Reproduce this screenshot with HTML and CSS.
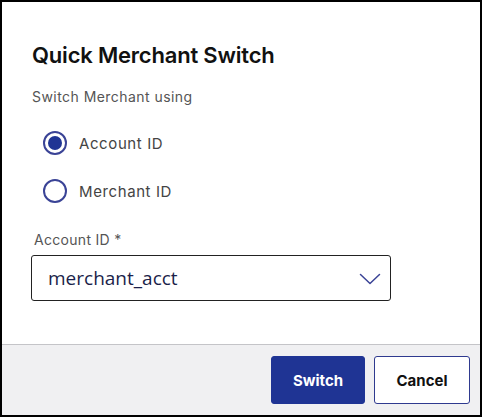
FILE: index.html
```html
<!DOCTYPE html>
<html>
<head>
<meta charset="utf-8">
<link rel="stylesheet" href="styles.css">
</head>
<body>
<div class="dialog">
  <div class="content">
    <h1 class="title">Quick Merchant Switch</h1>
    <p class="subtitle">Switch Merchant using</p>
    <div class="radios">
      <label class="radio-row">
        <span class="radio checked"><span class="dot"></span></span>
        <span class="radio-label">Account ID</span>
      </label>
      <label class="radio-row">
        <span class="radio"></span>
        <span class="radio-label">Merchant ID</span>
      </label>
    </div>
    <div class="field-label">Account ID *</div>
    <div class="select">
      <span class="select-value">merchant_acct</span>
      <svg class="chevron" width="22" height="12" viewBox="0 0 22 12"><path d="M1.5 1.5 L11 10.5 L20.5 1.5" fill="none" stroke="#3a4396" stroke-width="1.5" stroke-linecap="round" stroke-linejoin="round"/></svg>
    </div>
  </div>
  <div class="footer">
    <button class="btn btn-primary">Switch</button>
    <button class="btn btn-secondary">Cancel</button>
  </div>
</div>
</body>
</html>
```
FILE: styles.css
```css
* { box-sizing: border-box; }
html, body { margin: 0; padding: 0; background: #fff; }
body { font-family: Inter, "Noto Sans", sans-serif; }
.dialog {
  width: 482px;
  height: 417px;
  border: 2px solid #000;
  display: flex;
  flex-direction: column;
  background: #fff;
}
.content {
  flex: 1;
  padding: 39px 0 0 30px;
}
.title {
  margin: 0;
  font-size: 22px;
  line-height: 28px;
  font-weight: 600;
  color: #111;
  letter-spacing: -0.2px;
}
.subtitle {
  margin: 18px 0 0 0;
  font-size: 14px;
  line-height: 20px;
  letter-spacing: 0.45px;
  color: #555;
}
.radios {
  margin-top: 24px;
  display: flex;
  flex-direction: column;
  gap: 24px;
}
.radio-row {
  display: flex;
  align-items: center;
  gap: 12px;
  padding-left: 11px;
  height: 24px;
}
.radio {
  width: 24px;
  height: 24px;
  border-radius: 50%;
  border: 2px solid #3a4396;
  display: flex;
  align-items: center;
  justify-content: center;
}
.dot {
  width: 14px;
  height: 14px;
  border-radius: 50%;
  background: #1f3494;
}
.radio-label {
  font-size: 15px;
  letter-spacing: 0.6px;
  color: #444;
}
.field-label {
  margin-top: 27px;
  padding-left: 2px;
  font-size: 14px;
  line-height: 20px;
  letter-spacing: 0.3px;
  color: #555;
}
.select {
  margin-top: 5px;
  margin-left: -1px;
  width: 360px;
  height: 46px;
  border: 1.5px solid #222;
  border-radius: 3px;
  display: flex;
  align-items: center;
  justify-content: space-between;
  padding: 0 9px 0 16px;
}
.select-value {
  font-size: 19px;
  color: #1b1f4a;
  font-family: "Open Sans", sans-serif;
}
.chevron { margin-top: 2px; }
.footer {
  height: 71px;
  background: #f0f0f2;
  border-top: 1px solid #c4c4c8;
  display: flex;
  justify-content: flex-end;
  align-items: flex-start;
  gap: 9px;
  padding: 11px 10px 0 0;
}
.btn {
  height: 48px;
  border-radius: 3px;
  font-family: Inter, sans-serif;
  font-size: 15px;
  font-weight: 700;
  cursor: pointer;
}
.btn-primary {
  width: 94px;
  background: #1f3494;
  border: 1px solid #1f3494;
  color: #fff;
}
.btn-secondary {
  width: 96px;
  background: #fff;
  border: 1.5px solid #2f3a8f;
  color: #111;
}
```
